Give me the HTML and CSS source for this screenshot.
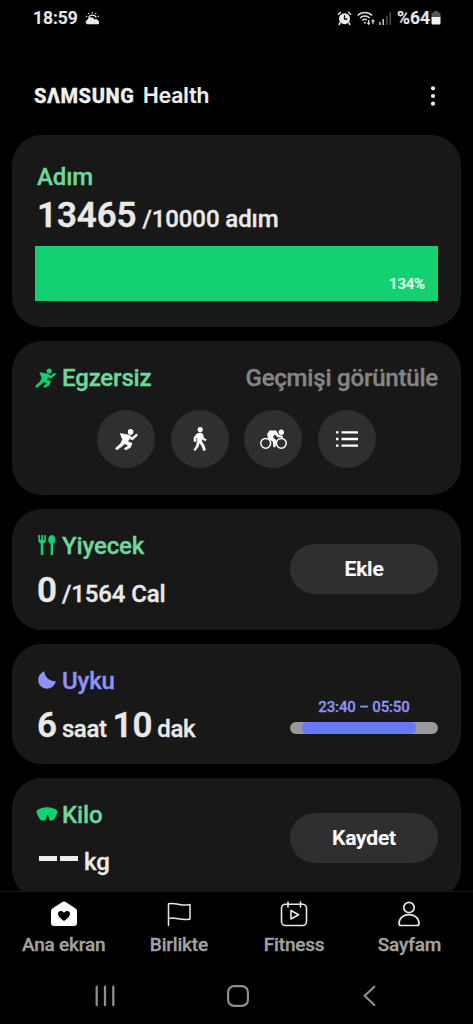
FILE: index.html
```
<!DOCTYPE html>
<html lang="tr">
<head>
<meta charset="utf-8">
<title>Samsung Health</title>
<link rel="stylesheet" href="styles.css">
</head>
<body>
<svg width="0" height="0" class="defs">
  <symbol id="runner" viewBox="0 0 23 21">
    <circle cx="15.600" cy="2.900" r="2.800"/>
    <path d="M5.300 4.500 14.200 6.200 17.200 8.400 21.400 5 22.600 6.300 17.500 10.900 14.700 9.600 12.500 12.400 17 14.300 15.300 18.500 10.500 21 9.400 19.500 12.800 17.200 13.200 16.200 9.600 14.700 7.500 16.800 1.800 20.900.5 19.300 5.600 14.800 8.700 8.300 7.400 10Z" stroke="currentColor" stroke-width=".7" stroke-linejoin="round"/>
  </symbol>
</svg>
<div class="phone">
  <div class="status">
    <span class="clock">18:59</span>
    <svg class="weather" width="15" height="13" viewBox="0 0 15 13" fill="#e8e8e8">
      <path d="M2.200 12.200a2.100 2.100 0 0 1 .1-4.100 3.900 3.900 0 0 1 7.200-.7 2.800 2.800 0 0 1 3.700 1.400 1.800 1.800 0 0 1-.4 3.400Z"/>
      <path class="line" d="M3.600 5.700a4.100 4.100 0 0 1 7.600-.2" stroke="#e8e8e8" stroke-width="1.300"/>
      <path d="M7.300 0v1.400M3.400 1.100l.8 1.200M11.200 1.100l-.8 1.200M.9 4l1.300.7M13.800 4l-1.300.7" stroke="#ddd" stroke-width="1.100"/>
    </svg>
    <span class="spacer"></span>
    <svg class="alarm" width="15" height="15" viewBox="0 0 15 15">
      <path d="M1 3.800 3.800 1M14 3.800 11.200 1" stroke="#eee" stroke-width="1.300"/>
      <circle cx="7.500" cy="7.700" r="5.500" fill="#eee"/>
      <path d="M3.300 11.300 2 13.800M11.700 11.300l1.300 2.500" stroke="#eee" stroke-width="1.700"/>
      <path class="line" d="M7.500 4.200V8h2.800" stroke="#000" stroke-width="1.300"/>
    </svg>
    <svg class="wifi" width="19" height="15" viewBox="0 0 19 15" fill="none" stroke="#ddd" stroke-width="1.400">
      <path d="M.7 4.500a10 10 0 0 1 14.400 0M3 7.100a6.800 6.800 0 0 1 9.800 0M5.200 9.600a3.800 3.800 0 0 1 4.700-.6"/>
      <circle cx="7.900" cy="11.700" r="1" fill="#ddd" stroke="none"/>
      <path d="M11.600 9v4M16 13.200v-4" stroke-width="1.200"/>
      <path d="M9.600 11.700h4l-2 2.600ZM14 10.600h4l-2-2.600Z" fill="#ddd" stroke="none"/>
    </svg>
    <svg class="signal" width="13" height="13" viewBox="0 0 13 13">
      <path d="M1 10v3M4.300 7v6" stroke="#ccc" stroke-width="1.500"/>
      <path d="M7.800 4v9M11.300 0v13" stroke="#444" stroke-width="1.700"/>
    </svg>
    <span class="percent">%64</span>
    <svg class="battery" width="10" height="14" viewBox="0 0 10 14">
      <path d="M3 0h4v1.500h1.500Q9.500 1.500 9.500 2.500V7H.5V2.500Q.5 1.500 1.500 1.500H3Z" fill="#555"/>
      <path d="M.5 6h9v6.700q0 .8-.8.8H1.300q-.8 0-.8-.8Z" fill="#f2f2f2"/>
    </svg>
  </div>

  <header class="header">
    <h1 class="brand"><span class="samsung">SΛMSUNG</span><span class="health">Health</span></h1>
    <svg width="6" height="20" viewBox="0 0 6 20" fill="#eee"><circle cx="3" cy="2.300" r="2.100"/><circle cx="3" cy="10" r="2.100"/><circle cx="3" cy="17.700" r="2.100"/></svg>
  </header>

  <main class="cards">
    <section class="card steps">
      <h2 class="title green"><span>Adım</span></h2>
      <p class="value"><b class="n-steps">13465</b><span class="u-steps">/10000 adım</span></p>
      <div class="bar"><span>134%</span></div>
    </section>

    <section class="card exercise">
      <div class="row">
        <h2 class="title green"><svg class="ico i-run" width="21" height="20"><use href="#runner"/></svg><span>Egzersiz</span></h2>
        <span class="history">Geçmişi görüntüle</span>
      </div>
      <div class="rounds">
        <span class="round"><svg width="23" height="21"><use href="#runner"/></svg></span>
        <span class="round"><svg width="14" height="26" viewBox="0 0 15 26">
          <circle cx="7.700" cy="2.900" r="2.800"/>
          <path d="M6 6.600h3.200l1.300 1.300 1 4 2.800 1.700-.9 1.600-3.600-1.800-.4-1.200v3.200l2.800 4.600 1.300 4.800-2.300.7-1.700-4.700-2.600-3.600-1.300 4.200-3.200 4.200-1.500-1.400 2.600-3.800 1-4.900V11l-1.200 1.400v3.200H1v-4.200L3.500 8Z" stroke="#fff" stroke-width=".5" stroke-linejoin="round"/>
        </svg></span>
        <span class="round"><svg width="27" height="21" viewBox="0 0 27 21">
          <circle class="line" cx="5.700" cy="14.300" r="4.900" stroke="#fff" stroke-width="1.500"/>
          <circle class="line" cx="21.300" cy="14.300" r="4.900" stroke="#fff" stroke-width="1.500"/>
          <circle cx="21.300" cy="3.300" r="2.700"/>
          <path d="M9.500 1.500h6.700l2.300 4.300 4.500 1.200v1.700l-5.500-.4-2.500-2.800-2.200 2.500 3.300 2.900-.6 7.400h-2.100l-.6-5.600-5-3.600L7.200 5Z"/>
        </svg></span>
        <span class="round"><svg width="22" height="18" viewBox="0 0 22 18" stroke="#fff" stroke-width="2.300">
          <path d="M0 2.300h2.500M0 9h2.500M0 15.700h2.500M5.500 2.300H22M5.500 9H22M5.500 15.700H22"/>
        </svg></span>
      </div>
    </section>

    <section class="card split">
      <div>
        <h2 class="title green"><svg class="ico i-food" width="18" height="20" viewBox="0 0 18 20">
          <path d="M.2 0h1.700v5H3.200V0h1.700v5h1.300V0h1.700v5.500q0 2.400-2.500 3V20H2.700V8.500Q.2 7.900.2 5.500Z"/>
          <path d="M13.800 0c2.200 0 3.600 2.200 3.600 4.800 0 2.200-1.100 3.500-2.400 4V20h-2.400V8.800c-1.300-.5-2.400-1.800-2.400-4C10.200 2.200 11.600 0 13.800 0Z"/>
        </svg><span>Yiyecek</span></h2>
        <p class="value"><b>0</b><span class="u-food">/1564 Cal</span></p>
      </div>
      <button class="btn">Ekle</button>
    </section>

    <section class="card split">
      <div>
        <h2 class="title blue"><svg class="ico i-moon" width="18" height="18" viewBox="0 0 18 18"><path d="M6.300.3C6.800 6 11 10.300 17.900 10.300 16.500 15.200 13 17.700 9 17.700 4.200 17.700.2 14 .2 9.200.2 5.200 2.600 1.800 6.300.3Z"/></svg><span>Uyku</span></h2>
        <p class="value"><b>6</b><span class="u-saat">saat</span><b class="n-ten">10</b><span class="u-dak">dak</span></p>
      </div>
      <div class="sleep">
        <span class="range">23:40 – 05:50</span>
        <div class="track"><i></i></div>
      </div>
    </section>

    <section class="card split">
      <div>
        <h2 class="title green"><svg class="ico i-kilo" width="22" height="14" viewBox="0 0 22 14"><path d="M.3 4C5.500-.9 16.500-.9 21.700 4c-.5 3-2 6.200-3.700 8.500-.8 1.100-2.500 1.300-4.600.8L12 8h-.9L9.700 13.300c-2.800.5-4.900.4-5.700-.8C2.300 10.200.8 7 .3 4Z"/></svg><span>Kilo</span></h2>
        <p class="value weight"><span class="dashes"><i></i><i></i></span><span class="u-kg">kg</span></p>
      </div>
      <button class="btn">Kaydet</button>
    </section>
  </main>

  <nav class="tabs">
    <a class="tab"><svg width="28" height="26" viewBox="0 0 28 26"><path d="M14 .5Q15 .5 16 1.300L25.700 7.500Q27 8.500 27 10V22q0 3-3 3H4q-3 0-3-3V10Q1 8.500 2.300 7.500L12 1.300Q13 .5 14 .5Z" fill="#fff"/><path d="M14 20C10 17 8 15.200 8 12.700 8 9.600 12 8.800 14 11.700 16 8.800 20 9.600 20 12.700 20 15.200 18 17 14 20Z" fill="#000"/></svg><span>Ana ekran</span></a>
    <a class="tab"><svg width="28" height="26" viewBox="0 0 28 26" fill="none" stroke="#e8e8e8" stroke-width="1.500" stroke-linecap="round" stroke-linejoin="round"><path d="M3.500 24.500V2.800C10.500.8 16.500 6 25 3.500V18C16.500 20.500 10.500 15.500 3.500 17.500"/></svg><span>Birlikte</span></a>
    <a class="tab"><svg width="28" height="26" viewBox="0 0 28 26" fill="none" stroke="#e8e8e8" stroke-width="1.600" stroke-linecap="round" stroke-linejoin="round"><rect x="1.500" y="3.200" width="25" height="21.300" rx="4"/><path d="M8 1v5M20.500 1v5M11 9.500v8.500l7.500-4.200Z"/></svg><span>Fitness</span></a>
    <a class="tab"><svg width="28" height="26" viewBox="0 0 28 26" fill="none" stroke="#e8e8e8" stroke-width="1.700" stroke-linejoin="round"><circle cx="14" cy="6.500" r="5.200"/><path d="M6 24.500q-2 0-2-2C4 10.700 24 10.700 24 22.500q0 2-2 2Z"/></svg><span>Sayfam</span></a>
  </nav>

  <div class="system">
    <svg width="20" height="22" viewBox="0 0 20 22" stroke="#8e8e8e" stroke-width="2.300" stroke-linecap="round"><path d="M1.700 1.700v18.500M10 1.700v18.500M18.300 1.700v18.500"/></svg>
    <svg class="home" width="22" height="22" viewBox="0 0 22 22" fill="none" stroke="#8e8e8e" stroke-width="2.200"><rect x="1.100" y="1.100" width="19.800" height="19.800" rx="6"/></svg>
    <svg width="13" height="22" viewBox="0 0 13 22" fill="none" stroke="#8e8e8e" stroke-width="2.200" stroke-linecap="round"><path d="M11.300 1.700 1.700 10.800 11.300 20"/></svg>
  </div>
</div>
</body>
</html>
```
FILE: styles.css
```
* { box-sizing: border-box; margin: 0; padding: 0; }
body { background: #000; font-family: Roboto, sans-serif; font-weight: 500; color: #e9e9e9; }
svg { display: block; fill: currentColor; flex: none; }
svg[fill="none"] { fill: none; }
.line { fill: none; }
.defs { display: none; }
span { white-space: nowrap; }
.phone { width: 473px; height: 1024px; display: flex; flex-direction: column; overflow: hidden; background: #000; }

.status { height: 36px; padding: 0 32px 0 33px; display: flex; align-items: center; font-size: 17.500px; line-height: 20px; font-weight: 600; -webkit-text-stroke: .2px; }
.weather { margin-left: 7px; }
.spacer { flex: 1; }
.wifi { margin-left: 5px; }
.signal { margin: 1px 0 0 3px; }
.percent { margin-left: 5px; }
.battery { margin: -1px 0 0 1px; }

.header { height: 99px; padding: 20px 37px 0 34px; display: flex; justify-content: space-between; align-items: center; }
.brand { display: flex; align-items: baseline; line-height: 26px; color: #f0f0f0; }
.samsung { font-family: Roboto, sans-serif; font-weight: 800; font-size: 20px; letter-spacing: .6px; width: 100px; -webkit-text-stroke: .3px; }
.health { font-family: Inter, sans-serif; font-weight: 600; font-size: 21px; margin-left: 9px; -webkit-text-stroke: .2px; }

.cards { height: 756px; overflow: hidden; padding: 0 12px; display: flex; flex-direction: column; gap: 14px; }
.card { flex: none; background: #181818; border-radius: 30px; padding: 25px 23px 0; }
.steps { height: 192px; padding-top: 28px; }
.exercise { height: 154px; padding-top: 23px; }
.split { height: 120.500px; padding-top: 23px; display: flex; justify-content: space-between; align-items: flex-start; }
.title { display: flex; align-items: center; font-size: 24px; line-height: 28px; font-weight: 500; letter-spacing: -.15px; -webkit-text-stroke: .35px; }
.green { color: #6ed79b; }
.blue { color: #8c93f5; }
.ico { margin-right: 6px; }
.green .ico { color: #13d170; }
.steps .title, .steps .value { padding-left: 2px; }
.value { display: flex; align-items: baseline; font-size: 24px; line-height: 40px; padding-left: 2px; letter-spacing: -.1px; -webkit-text-stroke: .35px; }
.value b { font-size: 35px; font-weight: 600; }
.split .value { margin-top: 11px; }
.steps .value { margin-top: 5px; }
.u-steps { margin-left: 6px; }
.u-food, .u-saat, .u-dak { margin-left: 5px; }
.u-dak, .u-saat { letter-spacing: -.4px; }
.n-ten { margin-left: 6px; }
.bar { height: 55px; margin: 7px 0 0 -.5px; background: #13d170; display: flex; justify-content: flex-end; align-items: flex-end; padding: 0 13px 8px; font-size: 15px; line-height: 18px; color: #e2fbea; font-weight: 600; letter-spacing: -.2px; -webkit-text-stroke: .2px; }

.row { display: flex; justify-content: space-between; align-items: center; }
.history { font-size: 24px; line-height: 28px; color: #858585; letter-spacing: -.2px; -webkit-text-stroke: .35px; }
.rounds { display: flex; justify-content: center; gap: 15.500px; margin: 18px 0 0; color: #fff; }
.round { width: 58px; height: 58px; border-radius: 50%; background: #2f2f2f; display: flex; align-items: center; justify-content: center; }

.i-food, .i-moon { margin: -2px 6px 0 3px; }
.i-kilo { margin: -3px 4px 0 1px; }
.btn { width: 148px; height: 50px; border: 0; border-radius: 25px; background: #2f2f2f; color: #fff; font: 600 21px/26px Roboto, sans-serif; letter-spacing: -.15px; margin-top: 12px; -webkit-text-stroke: .2px; }
.sleep { width: 148px; margin-top: 31px; display: flex; flex-direction: column; align-items: center; }
.range { font-size: 15px; line-height: 18px; color: #8c93f5; letter-spacing: -.15px; -webkit-text-stroke: .3px; }
.track { width: 148px; height: 12px; margin-top: 6px; border-radius: 6px; background: #999; padding: 0 22px 0 12px; }
.track i { display: block; height: 12px; border-radius: 5px; background: #657af3; }
.split .weight { margin-top: 13px; }
.dashes { display: flex; gap: 3px; align-self: flex-start; margin: 14px 0 0 2px; }
.dashes i { width: 18px; height: 5px; background: #ececec; }
.u-kg { margin-left: 6px; }

.tabs { height: 73px; border-top: 1px solid #141414; padding: 9px 6px 0; display: grid; grid-template-columns: repeat(4, 1fr); }
.tab { display: flex; flex-direction: column; align-items: center; font-size: 19px; line-height: 22px; color: #a2a2a2; letter-spacing: -.2px; -webkit-text-stroke: .3px; }
.tab svg { margin-bottom: 7px; }
.system { height: 60px; padding: 4px 97px 0 95px; display: flex; justify-content: space-between; align-items: center; }
.home { margin-left: -3px; }
```
